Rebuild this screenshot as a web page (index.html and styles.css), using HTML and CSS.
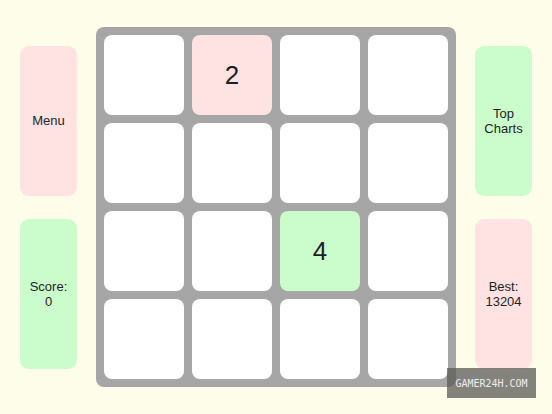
FILE: index.html
```html
<!DOCTYPE html>
<html>
<head>
<meta charset="utf-8">
<link rel="stylesheet" href="styles.css">
</head>
<body>
<div class="screen">
  <div class="side">
    <div class="panel pink">Menu</div>
    <div class="panel green">Score:<br>0</div>
  </div>
  <div class="board">
    <div class="tile"></div>
    <div class="tile pink">2</div>
    <div class="tile"></div>
    <div class="tile"></div>
    <div class="tile"></div>
    <div class="tile"></div>
    <div class="tile"></div>
    <div class="tile"></div>
    <div class="tile"></div>
    <div class="tile"></div>
    <div class="tile green">4</div>
    <div class="tile"></div>
    <div class="tile"></div>
    <div class="tile"></div>
    <div class="tile"></div>
    <div class="tile"></div>
  </div>
  <div class="side">
    <div class="panel green">Top<br>Charts</div>
    <div class="panel pink">Best:<br>13204</div>
  </div>
  <div class="watermark">GAMER24H.COM</div>
</div>
</body>
</html>
```
FILE: styles.css
```css
html, body {
  margin: 0;
  padding: 0;
}
body {
  background: #fefde9;
  font-family: "Liberation Sans", Arial, sans-serif;
  color: #1e1e1e;
}
.screen {
  position: relative;
  width: 552px;
  height: 414px;
  display: flex;
  align-items: center;
  padding-left: 20px;
  gap: 19px;
  box-sizing: border-box;
}
.side {
  display: flex;
  flex-direction: column;
  gap: 23px;
}
.panel {
  width: 57px;
  height: 150px;
  border-radius: 9px;
  display: flex;
  align-items: center;
  justify-content: center;
  text-align: center;
  font-size: 13px;
  line-height: 15px;
}
.pink { background: #ffe2e2; }
.green { background: #cbfccb; }
.board {
  width: 360px;
  height: 360px;
  box-sizing: border-box;
  padding: 8px;
  background: #a6a6a6;
  border-radius: 8px;
  display: grid;
  grid-template-columns: repeat(4, 80px);
  grid-template-rows: repeat(4, 80px);
  gap: 8px;
}
.tile {
  background: #ffffff;
  border-radius: 8px;
  display: flex;
  align-items: center;
  justify-content: center;
  font-size: 26px;
}
.tile.pink { background: #ffe2e2; }
.tile.green { background: #cbfccb; }
.watermark {
  position: absolute;
  left: 447px;
  top: 368px;
  width: 89px;
  height: 30px;
  background: rgba(90, 90, 85, 0.75);
  color: #ececec;
  font-family: "DejaVu Sans Mono", "Liberation Mono", monospace;
  font-size: 10px;
  display: flex;
  align-items: center;
  justify-content: center;
}
```
